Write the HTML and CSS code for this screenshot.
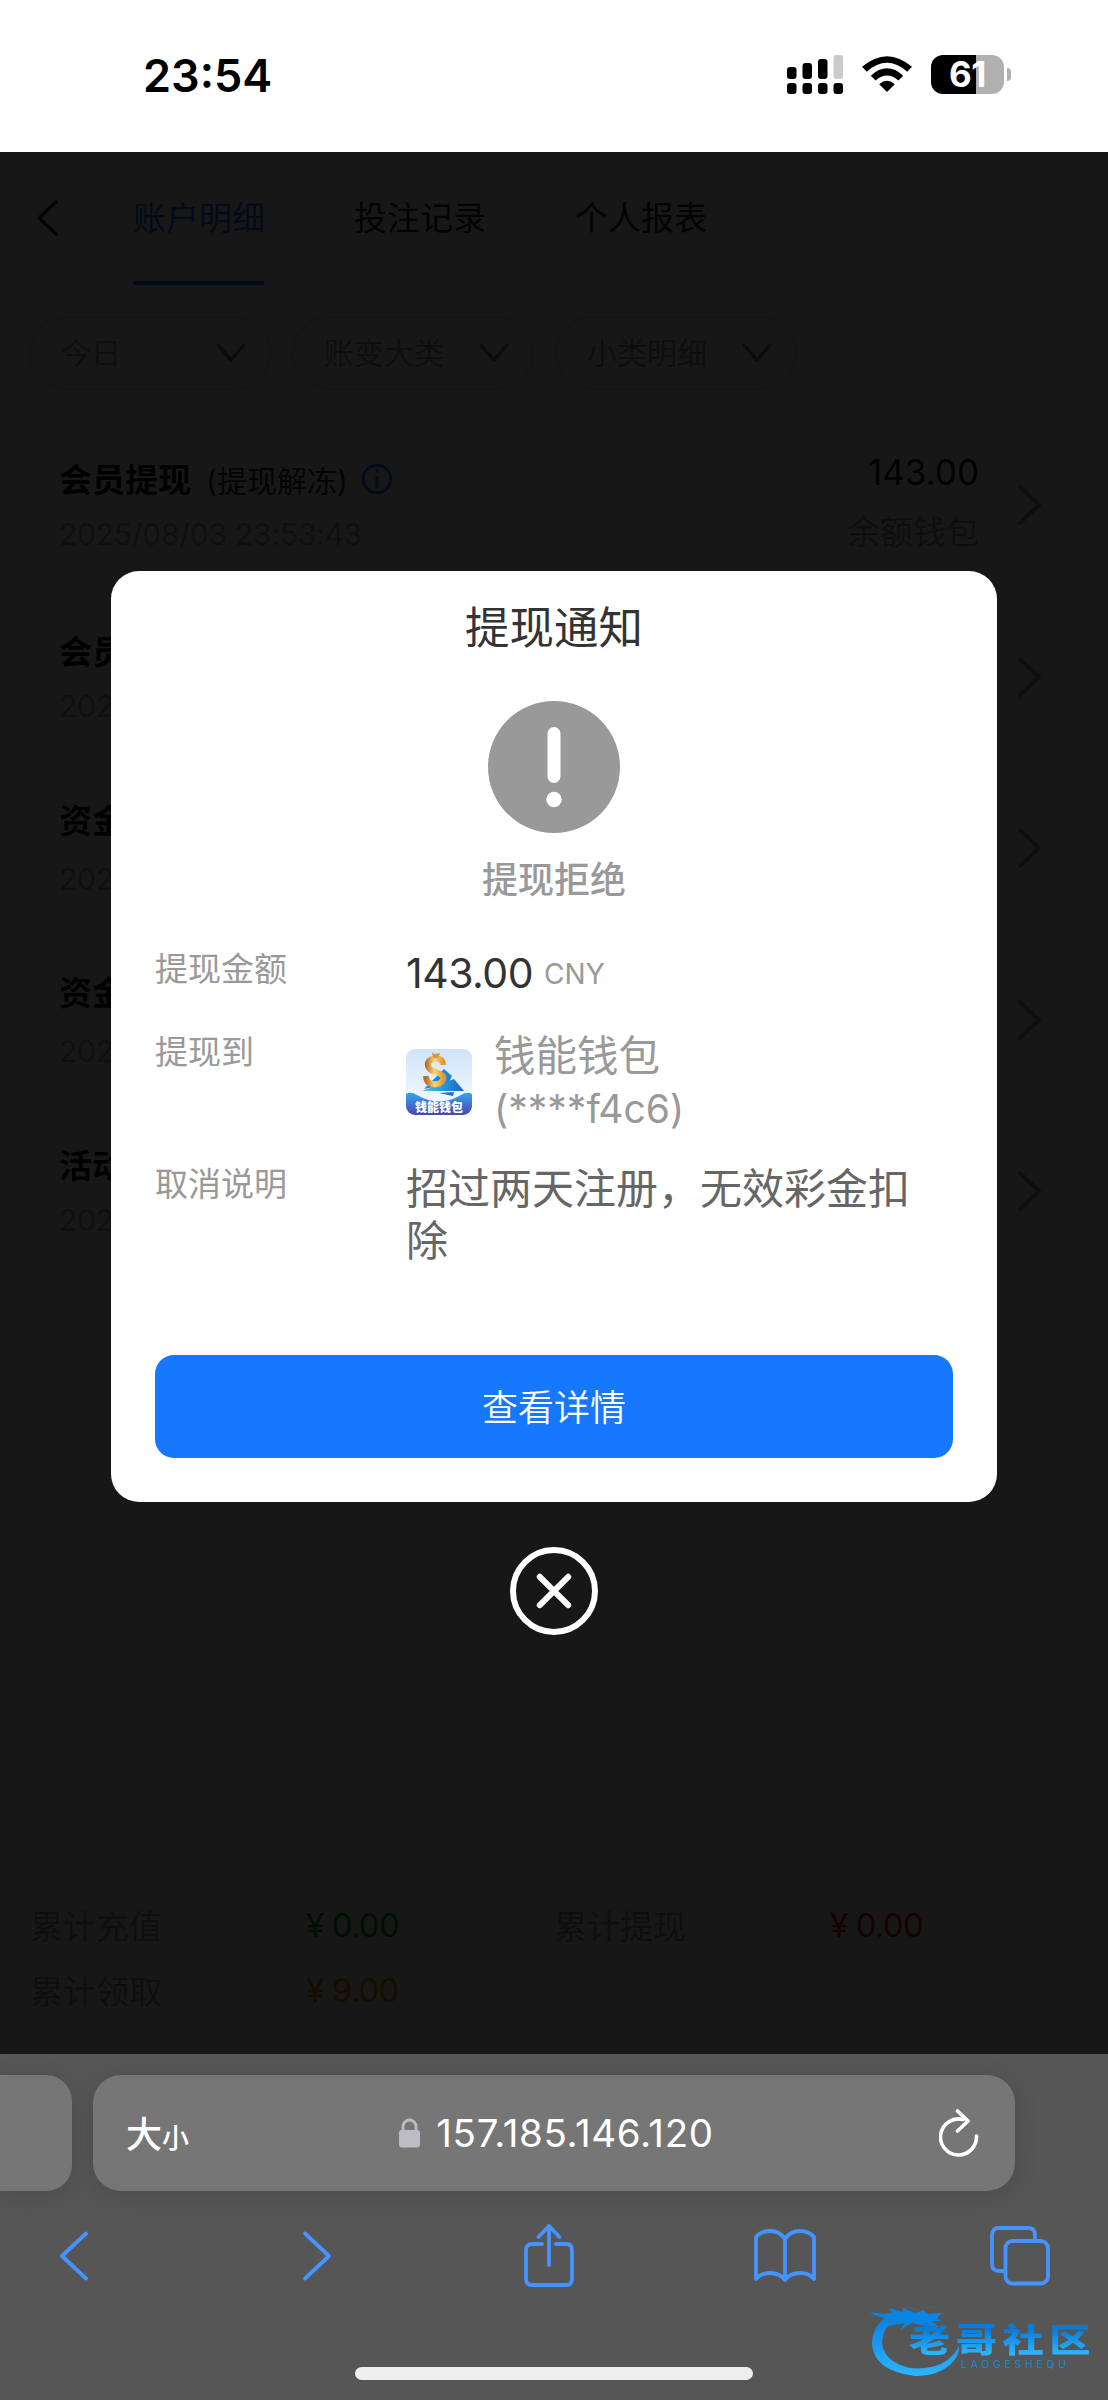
FILE: index.html
```html
<!DOCTYPE html>
<html lang="zh-CN">
<head>
<meta charset="utf-8">
<title>账户明细</title>
<link rel="stylesheet" href="styles.css">
</head>
<body>
<header class="status">
  <time class="clock">23:54</time>
  <div class="indicators">
    <svg class="signal" width="57" height="40" viewBox="0 0 57 40">
      <rect x="0" y="12" width="9.500" height="12" rx="3"/><rect x="15.500" y="8" width="9.500" height="16" rx="3"/><rect x="31" y="4" width="9.500" height="20" rx="3"/><rect x="46.500" y="0" width="9.500" height="24" rx="3" fill="#cbcbcb"/>
      <rect x="0" y="28" width="9.500" height="11" rx="3"/><rect x="15.500" y="28" width="9.500" height="11" rx="3"/><rect x="31" y="28" width="9.500" height="11" rx="3"/><rect x="46.500" y="28" width="9.500" height="11" rx="3"/>
    </svg>
    <svg class="wifi" width="50" height="38" viewBox="0 0 50 38">
      <path d="M0 10.800Q25-10.500 50 10.800L45.200 15.700Q25-2 4.800 15.700Z"/>
      <path d="M8.800 19.700Q25 5 41.200 19.700L36.400 24.500Q25 14.500 13.600 24.500Z"/>
      <path d="M17.200 28.200Q25 21.300 32.800 28.200L25 36Z"/>
    </svg>
    <div class="battery"><span class="level">61</span><i class="cap"></i></div>
  </div>
</header>

<main class="page">
  <nav class="tabs">
    <svg class="back" width="22" height="36" viewBox="0 0 22 36"><path d="M20 2L3 18L20 34"/></svg>
    <a class="tab active">账户明细</a>
    <a class="tab">投注记录</a>
    <a class="tab">个人报表</a>
  </nav>
  <div class="filters">
    <div class="filter"><span>今日</span><svg class="down" width="30" height="20" viewBox="0 0 30 20"><path d="M2 2L15 17L28 2"/></svg></div>
    <div class="filter"><span>账变大类</span><svg class="down" width="30" height="20" viewBox="0 0 30 20"><path d="M2 2L15 17L28 2"/></svg></div>
    <div class="filter"><span>小类明细</span><svg class="down" width="30" height="20" viewBox="0 0 30 20"><path d="M2 2L15 17L28 2"/></svg></div>
  </div>
  <section class="records">
    <article class="record">
      <div class="what">
        <h3>会员提现<small>(提现解冻)</small><svg class="info" width="32" height="32" viewBox="0 0 32 32"><circle cx="16" cy="16" r="13.800"/><path d="M16 14v10M16 8v.500"/></svg></h3>
        <p>2025/08/03 23:53:43</p>
      </div>
      <div class="sum"><b>143.00</b><span>余额钱包</span></div>
      <svg class="go" width="26" height="42" viewBox="0 0 26 42"><path d="M3 3L22 21L3 39"/></svg>
    </article>
    <article class="record">
      <div class="what"><h3>会员</h3><p>202</p></div>
      <svg class="go" width="26" height="42" viewBox="0 0 26 42"><path d="M3 3L22 21L3 39"/></svg>
    </article>
    <article class="record roomy">
      <div class="what"><h3>资金</h3><p>202</p></div>
      <svg class="go" width="26" height="42" viewBox="0 0 26 42"><path d="M3 3L22 21L3 39"/></svg>
    </article>
    <article class="record roomy">
      <div class="what"><h3>资金</h3><p>202</p></div>
      <svg class="go" width="26" height="42" viewBox="0 0 26 42"><path d="M3 3L22 21L3 39"/></svg>
    </article>
    <article class="record">
      <div class="what"><h3>活动</h3><p>202</p></div>
      <svg class="go" width="26" height="42" viewBox="0 0 26 42"><path d="M3 3L22 21L3 39"/></svg>
    </article>
  </section>
  <footer class="totals">
    <span>累计充值</span><b class="green">¥ 0.00</b><span>累计提现</span><b class="red">¥ 0.00</b>
    <span>累计领取</span><b class="amber">¥ 9.00</b>
  </footer>

  <div class="overlay">
    <section class="dialog">
      <h2>提现通知</h2>
      <svg class="alert" width="132" height="132" viewBox="0 0 132 132"><circle cx="66" cy="66" r="66" fill="#999"/><rect x="59.500" y="26" width="13" height="56" rx="6.500" fill="#fff"/><circle cx="66" cy="98.500" r="7.700" fill="#fff"/></svg>
      <p class="state">提现拒绝</p>
      <dl class="details">
        <dt>提现金额</dt>
        <dd class="amount">143.00<small>CNY</small></dd>
        <dt>提现到</dt>
        <dd class="wallet">
          <svg width="66" height="66" viewBox="0 0 66 66">
            <defs>
              <linearGradient id="sky" x2="0" y2="1"><stop stop-color="#cfe4fb"/><stop offset="1" stop-color="#fafdff"/></linearGradient>
              <linearGradient id="sea" x2="0" y2="1"><stop stop-color="#36a3f3"/><stop offset="1" stop-color="#4b46ad"/></linearGradient>
              <linearGradient id="gold"><stop stop-color="#b87025"/><stop offset=".5" stop-color="#ffd474"/><stop offset="1" stop-color="#dc9a32"/></linearGradient>
              <linearGradient id="fin"><stop stop-color="#48c6ea"/><stop offset="1" stop-color="#1464c8"/></linearGradient>
              <clipPath id="tile"><rect width="66" height="66" rx="9"/></clipPath>
            </defs>
            <g clip-path="url(#tile)">
              <rect width="66" height="66" fill="url(#sky)"/>
              <path d="M38 20L46 27L42 35L18 40Z" fill="#1987dc"/>
              <path d="M16 42L48 30L58 42Z" fill="url(#fin)"/>
              <path d="M37 16Q37 9 29 9.500Q20.500 11 22 17Q23 21 30 23Q39 26 37 31Q34 36 27 35Q20 34 20 27" fill="none" stroke="url(#gold)" stroke-width="6"/>
              <path d="M26 3L28 5L34 4L32 9H27Z" fill="#d79739"/>
              <path d="M33 44L48 43L47 47Z" fill="#1b6fd1"/>
              <path d="M0 45Q5 42 11 46Q33 59 55 46Q61 42 66 45V66H0Z" fill="url(#sea)"/>
              <text x="33" y="63" class="tile-name">钱能钱包</text>
            </g>
          </svg>
          <span class="account">钱能钱包<br><span class="tail">(****f4c6)</span></span>
        </dd>
        <dt>取消说明</dt>
        <dd class="reason">招过两天注册，无效彩金扣除</dd>
      </dl>
      <button class="primary">查看详情</button>
    </section>
    <svg class="close" width="88" height="88" viewBox="0 0 88 88"><circle cx="44" cy="44" r="41"/><path d="M29.800 29.800L58.200 58.200M58.200 29.800L29.800 58.200"/></svg>
  </div>
</main>

<footer class="browser">
  <div class="bars">
    <div class="prev-tab"></div>
    <div class="address">
      <span class="size">大<small>小</small></span>
      <span class="host"><svg width="22" height="30" viewBox="0 0 22 30"><rect y="12" width="21" height="17.500" rx="3" fill="#bdbcc4"/><path d="M4 13V8.500a6.500 6.500 0 0 1 13 0V13" fill="none" stroke="#bdbcc4" stroke-width="2.800"/></svg>157.185.146.120</span>
      <svg class="reload" width="40" height="48" viewBox="0 0 40 48"><path d="M24 10.500A18 18 0 1 0 37.500 27M18.500 2L29 12L18.500 22"/></svg>
    </div>
  </div>
  <div class="tools">
    <svg width="30" height="50" viewBox="0 0 30 50"><path d="M27 2.500L3 25L27 47.500"/></svg>
    <svg class="forward" width="30" height="50" viewBox="0 0 30 50"><path d="M3 2.500L27 25L3 47.500"/></svg>
    <svg class="share" width="50" height="64" viewBox="0 0 50 64"><path d="M18 20H8Q2 20 2 26V55Q2 61 8 61H42Q48 61 48 55V26Q48 20 42 20H32M25 41V3M14.500 13L25 2L35.500 13"/></svg>
    <svg class="book" width="62" height="54" viewBox="0 0 62 54"><path d="M31 10Q26 2 16 2Q7 2 2 8V50Q7 44 16 44Q26 44 31 51Q36 44 46 44Q55 44 60 50V8Q55 2 46 2Q36 2 31 10V51"/></svg>
    <svg class="pages" width="60" height="60" viewBox="0 0 60 60"><path d="M15 45H9Q2 45 2 38V9Q2 2 9 2H38Q45 2 45 9V14"/><rect x="15.500" y="15" width="42.500" height="42.500" rx="7"/></svg>
  </div>
  <div class="home"></div>
  <div class="mark">
    <svg width="96" height="76" viewBox="0 0 96 76">
      <defs><linearGradient id="azure" x2="0" y2="1"><stop stop-color="#087cdc"/><stop offset="1" stop-color="#2eb4ff"/></linearGradient></defs>
      <path d="M36 11Q14 19 12 38Q12 58 40 65Q72 68 86 48L89 43Q90 53 80 62Q65 74 45 73Q4 68 2 41Q2 19 26 9Z" fill="url(#azure)"/>
      <path d="M0 9Q12 12 22 10L19 5L32 9L33 5L45 10L53 7L58 11L72 10L67 15L71 18L60 18L70 24L54 23L42 20L30 27L35 20L18 23L25 15Q8 16 0 9Z" fill="#0a85e4"/>
      <path d="M43 8Q58 2 69 5M28 4Q38 3 47 7" fill="none" stroke="#50616c" stroke-width="1.200"/>
    </svg>
    <strong>老哥社区</strong>
    <em>LAOGESHEQU</em>
  </div>
</footer>
</body>
</html>
```
FILE: styles.css
```css
* { box-sizing: border-box; }
body {
  margin: 0;
  width: 1108px;
  height: 2400px;
  overflow: hidden;
  font-family: Inter, "Noto Sans CJK SC", sans-serif;
  background: #fff;
}
h2, h3, p, dl, dd { margin: 0; }
svg { display: block; flex: none; }
b { font-weight: 400; }

.status { height: 152px; display: flex; justify-content: space-between; padding: 47px 97px 0 143px; }
.clock { font-size: 45px; line-height: 58px; font-weight: 600; letter-spacing: 0; }
.indicators { display: flex; padding-top: 8px; }
.wifi { margin: 1px 19px 0 18px; }
.battery { display: flex; align-items: center; height: 39px; }
.level {
  width: 73px; height: 39px; border-radius: 12px; color: #fff;
  background: linear-gradient(90deg, #000 61.5%, #b0b0b0 61.5%);
  font-size: 35px; line-height: 39px; font-weight: 650; letter-spacing: -0.5px; text-align: center;
}
.cap { width: 4px; height: 13px; margin-left: 3px; border-radius: 0 4px 4px 0; background: #b0b0b0; }

.page { position: relative; height: 1902px; display: flex; flex-direction: column; }
.back, .down, .go, .info { fill: none; stroke-linecap: round; stroke-linejoin: round; }
.tabs { height: 134px; display: flex; padding-left: 36px; border-bottom: 2px solid #eee; }
.back { margin: 48px 75px 0 0; stroke: #333; stroke-width: 3.5; }
.tab { width: 131px; height: 133px; margin-right: 90px; font-size: 33px; line-height: 132px; white-space: nowrap; color: #222; }
.tab.active { color: #1677ff; border-bottom: 4px solid #1677ff; }
.filters { display: flex; gap: 21px; padding: 30px 29px 0; }
.filter {
  width: 242px; height: 74px; padding: 0 23px 0 30px; border: 2px solid #e0e0e0; border-radius: 37px;
  display: flex; align-items: center; justify-content: space-between; font-size: 30px; color: #999;
}
.filter span { padding-bottom: 4px; }
.down { stroke: #888; stroke-width: 3.5; }
.records { flex: 1; padding: 57px 65px 0 59px; }
.record { height: 171.5px; display: flex; }
.what { flex: 1; }
.record h3 { display: flex; align-items: center; height: 62px; font-size: 33px; font-weight: 700; color: #111; }
.record h3 small { margin: 2px 13px 0 15px; font-size: 30px; font-weight: 400; color: #333; }
.info { margin-top: 2px; stroke: #1677ff; stroke-width: 3; }
.record p { margin-top: -3px; font-size: 30px; line-height: 56px; letter-spacing: -0.25px; color: #aaa; }
.record.roomy h3 { margin-top: -2px; }
.record.roomy p { margin-top: 1px; }
.sum { display: flex; flex-direction: column; align-items: flex-end; color: #999; font-size: 33px; line-height: 50px; }
.sum b { font-size: 35px; line-height: 50px; color: #111; }
.sum span { margin-top: 10px; }
.go { margin: 37px 0 0 38px; stroke: #999; stroke-width: 4; }
.totals {
  height: 180px; padding: 16px 30px; border-top: 2px solid #eee;
  display: grid; grid-template-columns: 276px 248px 276px 1fr; grid-template-rows: 65px 65px; align-items: center;
  font-size: 33px; color: #999;
}
.totals b { letter-spacing: -0.8px; }
.green { color: #00a000; }
.red { color: #e02020; }
.amber { color: #e09000; }

.overlay {
  position: absolute; inset: 0; padding-top: 419px; background: rgba(0, 0, 0, 0.91);
  display: flex; flex-direction: column; align-items: center;
}
.dialog {
  width: 886px; height: 931px; padding: 25px 44px 0; border-radius: 28px; background: #fff;
  display: flex; flex-direction: column; align-items: center;
}
.dialog h2 { font-size: 44.5px; line-height: 64px; font-weight: 400; color: #333; }
.alert { margin-top: 41px; }
.state { margin-top: 21px; font-size: 36px; line-height: 52px; font-weight: 500; color: #999; }
.details {
  align-self: stretch; display: grid; grid-template-columns: 251px 1fr; grid-template-rows: 83px 132px auto;
  margin-top: 39px; height: 410px; font-size: 33px; line-height: 48px; color: #999;
}
.amount { font-size: 41px; line-height: 56px; letter-spacing: -0.5px; color: #333; }
.amount small { margin-left: 11px; font-size: 28px; vertical-align: 4px; color: #999; letter-spacing: 0; }
.wallet { display: flex; gap: 22px; font-size: 41.5px; line-height: 52px; }
.wallet svg { margin-top: 21px; }
.account { margin-top: 2px; }
.tail { font-size: 39px; }
.tile-name { font: 900 12px "Noto Sans CJK SC", sans-serif; fill: #fff; text-anchor: middle; }
.reason { padding: 3px 24px 0 0; font-size: 42px; line-height: 52px; color: #666; }
.primary {
  align-self: stretch; height: 103px; padding: 0 0 3px; border: 0; border-radius: 19px; background: #1677ff;
  color: #fff; font: 350 36px Inter, "Noto Sans CJK SC", sans-serif;
}
.close { margin-top: 45px; fill: none; stroke: #fff; stroke-width: 6; stroke-linecap: round; }

.browser { position: relative; height: 346px; background: #565656; }
.bars { display: flex; gap: 21px; padding-top: 21px; }
.prev-tab, .address { height: 116px; background: #767676; box-shadow: 0 4px 24px rgba(0, 0, 0, 0.12); }
.prev-tab { width: 72px; border-radius: 0 26px 26px 0; }
.address { width: 922px; border-radius: 28px; display: flex; align-items: center; justify-content: space-between; padding: 0 36px 0 33px; color: #fff; }
.size { font-size: 36px; font-weight: 500; padding-bottom: 3px; }
.size small { font-size: 27px; }
.host { display: flex; align-items: center; gap: 15px; margin-right: 15px; font-size: 38.5px; letter-spacing: 0.65px; }
.reload { fill: none; stroke: #fff; stroke-width: 3.6; stroke-linecap: round; stroke-linejoin: round; }
.tools { height: 130px; display: flex; align-items: center; padding-left: 59px; }
.tools svg { fill: none; stroke: #4593ff; stroke-width: 3.8; stroke-linecap: round; stroke-linejoin: round; }
.tools .forward { margin-left: 213px; }
.tools .share { margin-left: 192px; }
.tools .book { margin-left: 180px; }
.tools .pages { margin-left: 174px; }
.home { width: 398px; height: 13px; margin: 46px auto 0; border-radius: 7px; background: #eee; }
.mark { position: absolute; left: 870px; top: 249px; width: 230px; height: 76px; }
.mark strong {
  position: absolute; left: 39px; top: 20px; font-size: 33px; line-height: 34px; font-weight: 900; letter-spacing: 4.4px; white-space: nowrap;
  transform: scaleX(1.25); transform-origin: left;
  color: transparent; background: linear-gradient(#087cdc 20%, #2eb4ff 90%); background-clip: text;
}
.mark em { position: absolute; left: 91px; top: 57px; font: 400 10.5px/10px Inter, sans-serif; letter-spacing: 3.7px; color: #1787d8; }
```
